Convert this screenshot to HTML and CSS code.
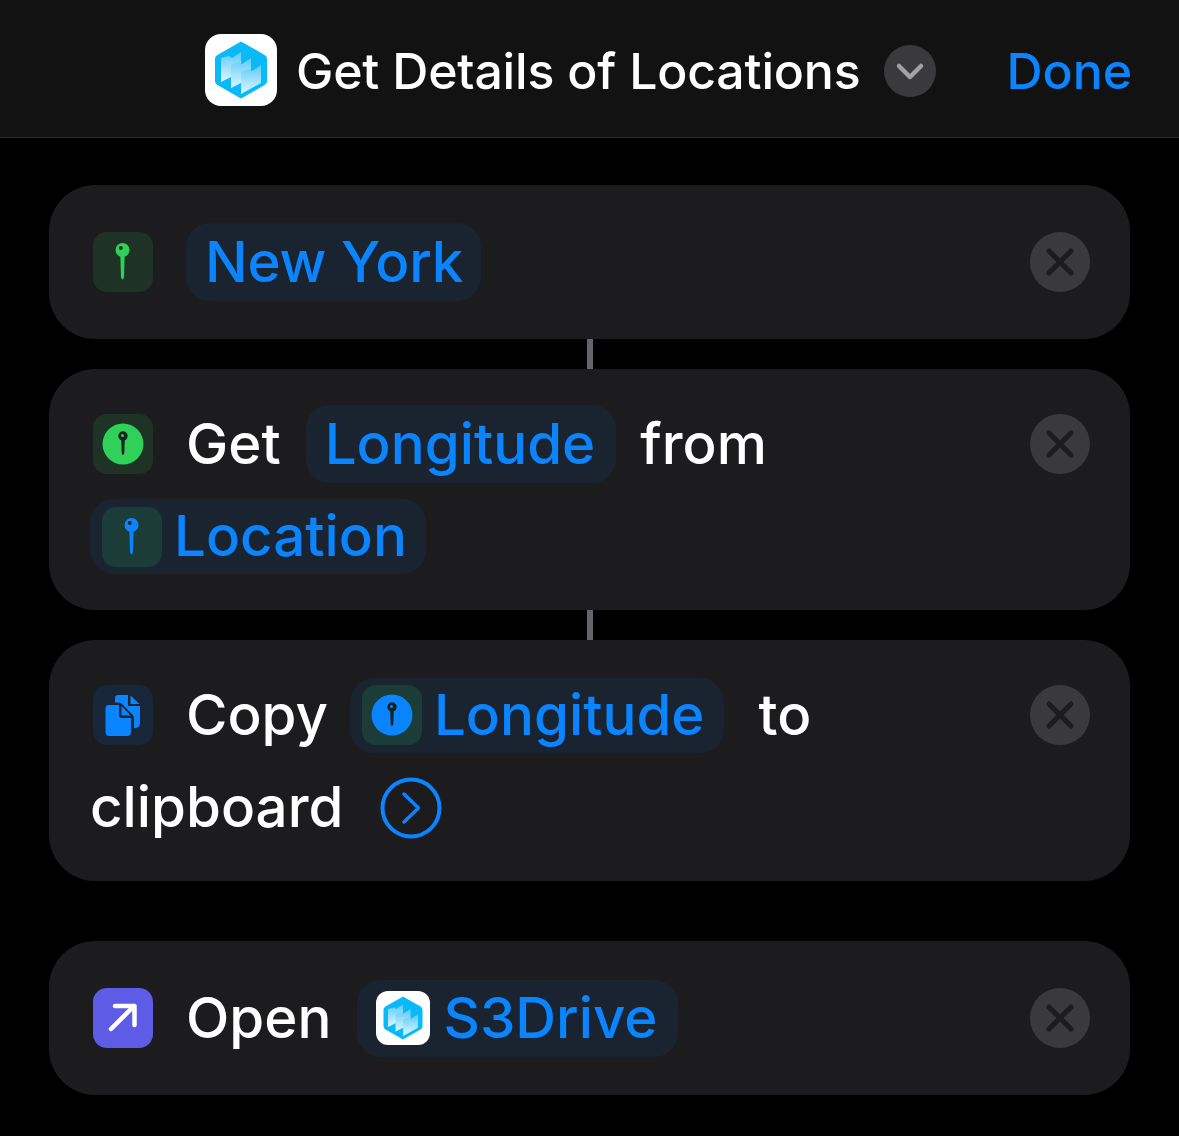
FILE: index.html
```html
<!DOCTYPE html>
<html lang="en">
<head>
  <meta charset="UTF-8" />
  <title>Get Details of Locations</title>
  <link rel="stylesheet" href="styles.css">
</head>
<body>
  <svg class="defs" width="0" height="0">
    <defs>
      <linearGradient id="folderFill" x1="0" y1="0" x2="0" y2="1">
        <stop offset="0" stop-color="#5ccbf9"/>
        <stop offset="1" stop-color="#dff6ff"/>
      </linearGradient>
      <symbol id="appIcon" viewBox="0 0 72 72">
        <rect width="72" height="72" rx="16" fill="#fff"/>
        <path d="M36 8.500 L59.500 22 Q61 23 61 25 V47 Q61 49 59.500 50 L36 63.500 L12.500 50 Q11 49 11 47 V25 Q11 23 12.500 22 Z" fill="#0abaf8" stroke="#0abaf8" stroke-width="2" stroke-linejoin="round"/>
        <path d="M16 24 L24 22 L27 24 L36 18 V38 L16 48 Z" fill="url(#folderFill)"/>
        <path d="M26 31 L34 28 L37 30 L46 24 V44 L26 54 Z" fill="url(#folderFill)"/>
        <path d="M36 38 L44 35 L47 37 L56 31 V49 L36 60 Z" fill="url(#folderFill)"/>
      </symbol>
      <symbol id="pin" viewBox="0 0 60 60">
        <path d="M27.300 22 H31.700 L31 45 Q29.500 50 28 45 Z" fill="currentColor"/>
        <circle cx="29.500" cy="18" r="7" fill="currentColor"/>
        <circle cx="27.800" cy="16" r="2" fill="#1c2a24"/>
      </symbol>
      <symbol id="pinDisc" viewBox="0 0 60 60">
        <circle cx="30" cy="30" r="20.500" fill="currentColor"/>
        <path d="M28.200 24 H31.800 L31.300 39 Q30 43 28.700 39 Z" fill="#17241d"/>
        <circle cx="30" cy="22" r="4.700" fill="#17241d"/>
        <circle cx="29.500" cy="21.500" r="1.500" fill="currentColor"/>
      </symbol>
      <symbol id="closeIcon" viewBox="0 0 60 60">
        <circle cx="30" cy="30" r="30" fill="#3a3a3c"/>
        <path d="M19 19 L41 41 M41 19 L19 41" stroke="#1c1c1e" stroke-width="5" stroke-linecap="round"/>
      </symbol>
    </defs>
  </svg>

  <header class="topbar">
    <svg class="app-icon-lg"><use href="#appIcon"/></svg>
    <span class="title">Get Details of Locations</span>
    <span class="chevron">
      <svg width="52" height="52" viewBox="0 0 52 52"><path d="M15 21 L26 32 L37 21" fill="none" stroke="#a1a1a8" stroke-width="4.500" stroke-linecap="round" stroke-linejoin="round"/></svg>
    </span>
    <span class="done">Done</span>
  </header>

  <main class="flow">
    <section class="card single">
      <div class="lines">
        <div class="row">
          <span class="tile tile-green"><svg class="pin-green"><use href="#pin"/></svg></span>
          <span class="token token-first">New York</span>
        </div>
      </div>
      <svg class="close"><use href="#closeIcon"/></svg>
    </section>
    <div class="connector"></div>

    <section class="card">
      <div class="lines">
        <div class="row">
          <span class="tile tile-green"><svg class="pin-green"><use href="#pinDisc"/></svg></span>
          <span class="word word-get">Get</span>
          <span class="token">Longitude</span>
          <span class="word">from</span>
        </div>
        <div class="row row-wrap">
          <span class="token token-icon">
            <span class="tile tile-var"><svg class="pin-blue"><use href="#pin"/></svg></span>
            Location
          </span>
        </div>
      </div>
      <svg class="close"><use href="#closeIcon"/></svg>
    </section>
    <div class="connector"></div>

    <section class="card">
      <div class="lines">
        <div class="row">
          <span class="tile tile-blue">
            <svg width="60" height="60" viewBox="0 0 60 60">
              <path d="M25 10 H35 V20 Q35 21 36 21 H47 V38 Q47 43 42 43 H41 V33 Q41 31 39.500 29.500 L29 19 Q27.500 17.500 25 17.500 H22 V13 Q22 10 25 10 Z M37.500 10.500 L46.500 19 H38 Q37.500 19 37.500 18.500 Z" fill="#0a84ff"/>
              <path d="M16 20 H26 V30 Q26 33 29 33 H38 V47 Q38 51 34 51 H16 Q12.500 51 12.500 47 V23.500 Q12.500 20 16 20 Z M28.500 21 L37.500 30.500 H29.500 Q28.500 30.500 28.500 29.500 Z" fill="#0a84ff"/>
            </svg>
          </span>
          <span class="word">Copy</span>
          <span class="token token-icon">
            <span class="tile tile-var"><svg class="pin-blue"><use href="#pinDisc"/></svg></span>
            Longitude
          </span>
          <span class="word word-to">to</span>
        </div>
        <div class="row row-wrap">
          <span class="word word-flush">clipboard</span>
          <svg class="more" width="62" height="62" viewBox="0 0 62 62">
            <circle cx="31" cy="31" r="28.500" fill="none" stroke="#0a84ff" stroke-width="4"/>
            <path d="M24 17 L38.500 31 L24 45" fill="none" stroke="#0a84ff" stroke-width="3.500" stroke-linecap="round" stroke-linejoin="round"/>
          </svg>
        </div>
      </div>
      <svg class="close"><use href="#closeIcon"/></svg>
    </section>

    <section class="card single card-apart">
      <div class="lines">
        <div class="row">
          <span class="tile tile-purple">
            <svg width="60" height="60" viewBox="0 0 60 60"><path d="M18 41 L41 18 M22 18 H41.500 V37" fill="none" stroke="#fff" stroke-width="4.500" stroke-linecap="round" stroke-linejoin="round"/></svg>
          </span>
          <span class="word">Open</span>
          <span class="token token-app">
            <svg class="app-icon-sm"><use href="#appIcon"/></svg>
            S3Drive
          </span>
        </div>
      </div>
      <svg class="close"><use href="#closeIcon"/></svg>
    </section>
  </main>
</body>
</html>
```

FILE: styles.css
```css
* { box-sizing: border-box; }
body { margin: 0; background: #000; color: #fff; font-family: Inter, "Liberation Sans", sans-serif; width: 1179px; height: 1136px; overflow: hidden; }
.defs { display: block; height: 0; }

.topbar { height: 138px; background: #121212; border-bottom: 1px solid #2b2b2d; display: flex; align-items: center; padding: 2px 0 0 205px; }
.app-icon-lg { width: 72px; height: 72px; margin-right: 19px; }
.title { font-size: 50px; font-weight: 500; letter-spacing: -0.2px; white-space: nowrap; padding-top: 2px; }
.chevron { width: 52px; height: 52px; border-radius: 50%; background: #3a3a3c; margin: 2px 0 0 24px; display: block; }
.chevron svg { display: block; }
.done { color: #0a84ff; font-size: 50px; font-weight: 500; margin-left: 70px; padding-top: 2px; }

.flow { display: flex; flex-direction: column; align-items: center; padding: 47px 49px 0; }
.connector { width: 6px; height: 30px; background: #636369; }

.card { width: 100%; background: #1c1c1e; border-radius: 46px; display: flex; justify-content: space-between; padding: 29px 40px 27px 44px; }
.card.single { padding-top: 31px; padding-bottom: 31px; }
.card-apart { margin-top: 60px; }
.lines { display: flex; flex-direction: column; }
.row { height: 92px; display: flex; align-items: center; white-space: nowrap; }
.row-wrap { height: 93px; }

.word { font-size: 56.5px; font-weight: 450; margin-left: 33px; line-height: 1; }
.word + .token { margin-left: 22px; }
.word-get { margin-right: 3px; }
.word-flush { margin-left: -3px; }
.token + .word { margin-left: 24px; }
.token + .word-to { margin-left: 35px; }

.tile { width: 60px; height: 60px; border-radius: 14px; display: block; flex: none; }
.tile svg { display: block; width: 60px; height: 60px; }
.tile-green { background: #1e3326; }
.tile-blue { background: #182639; }
.tile-purple { background: #5e5ce6; }
.tile-var { background: #1c3d37; margin-right: 12px; }
.pin-green { color: #30d158; }
.pin-blue { color: #0a84ff; }

.token { background: #1a2430; color: #0a84ff; font-size: 56.5px; font-weight: 450; line-height: 1; border-radius: 24px; height: 78px; padding: 0 21px 0 19px; display: flex; align-items: center; }
.token-first { margin-left: 33px; padding-right: 18px; letter-spacing: -0.2px; }
.token-icon { height: 75px; padding: 0 19px 0 12px; }
.row-wrap .token-icon { margin-left: -3px; }
.token-app { height: 77px; padding: 0 20px 0 19px; }
.word + .token-app { margin-left: 26px; }
.app-icon-sm { width: 54px; height: 54px; margin-right: 13px; flex: none; }

.more { margin-left: 37px; }
.close { width: 60px; height: 60px; margin-top: 16px; flex: none; }
```
